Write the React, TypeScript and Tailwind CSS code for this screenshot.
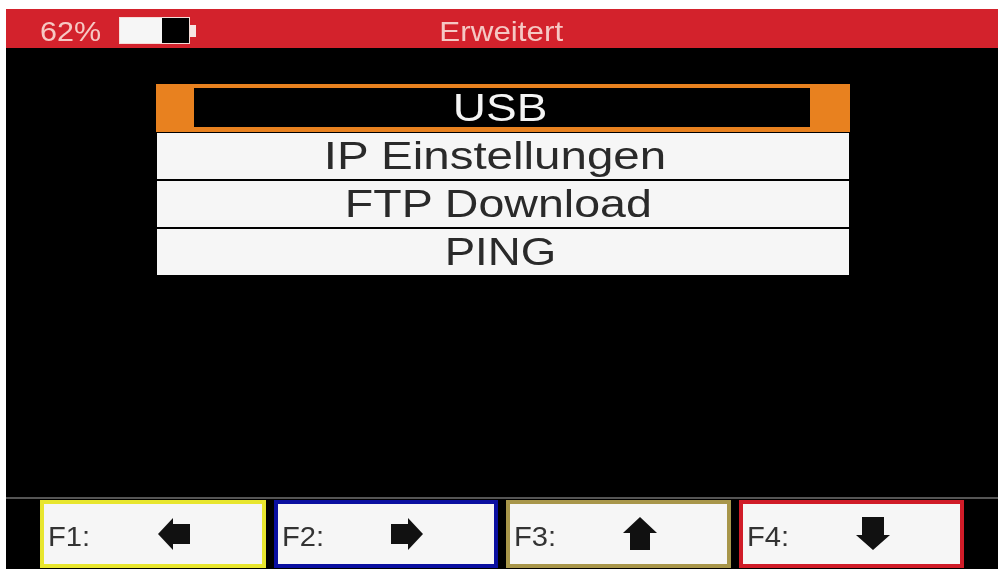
const fkeys = [
  { label: 'F1:', border: 'border-[#e8e62e]', icon: 'M1 17 L16 1 V7 H33 V27 H16 V33 Z', w: 'w-[226px]' },
  { label: 'F2:', border: 'border-[#0a0fa0]', icon: 'M32 17 L17 1 V7 H0 V27 H17 V33 Z', w: 'w-[224px]' },
  { label: 'F3:', border: 'border-[#a8964a]', icon: 'M17 0 L34 16 H27 V33 H7 V16 H0 Z', w: 'w-[225px]' },
  { label: 'F4:', border: 'border-[#d01c28]', icon: 'M17 33 L34 18 H28 V0 H6 V18 H0 Z', w: 'w-[225px]' },
];

const rows = [
  { text: 'IP Einstellungen', className: 'pr-[16px]', scale: 'scale-x-[1.25]' },
  { text: 'FTP Download', className: 'pr-[9px]', scale: 'scale-x-[1.225]' },
  { text: 'PING', className: 'pr-[6px]', scale: 'scale-x-[1.2]' },
];

export default function App() {
  return (
    <div className="h-[571px] w-[1001px] overflow-hidden bg-white pl-[6px] pt-[9px] font-['Liberation_Sans',sans-serif] blur-[0.6px]">
      <div className="flex h-[560px] w-[992px] flex-col bg-black">
        {/* Title bar */}
        <div className="relative flex h-[39px] shrink-0 items-center bg-[#d3222c] pl-[34px] text-[28px] text-[#f6c9c4]">
          <span className="mt-[6px] inline-block w-[79px] origin-left scale-x-[1.09] leading-[32px]">62%</span>
          <div className="mt-[4px] flex items-center">
            <div className="flex h-[27px] w-[71px] border border-[#f6dcd8]">
              <div className="w-[42px] bg-[#f6f6f6]" />
              <div className="flex-1 bg-black" />
            </div>
            <div className="h-[12px] w-[6px] bg-[#f6e6e4]" />
          </div>
          <div className="absolute inset-x-0 top-[7px] pr-[2px] text-center leading-[32px]">
            <span className="inline-block scale-x-[1.12] text-[#f5c8c4]">Erweitert</span>
          </div>
        </div>

        {/* Menu */}
        <div className="flex-1 pl-[150px] pt-[36px]">
          <div className="w-[694px] text-center text-[38px] leading-[46px] text-[#2a2a2a]">
            <div className="h-[48px] bg-[#e8811f] pb-[5px] pl-[38px] pr-[40px] pt-[4px]">
              <div className="h-[39px] bg-black pr-[3px] leading-[40px] text-[#f4f4f4]">
                <span className="inline-block scale-x-[1.21]">USB</span>
              </div>
            </div>
            <div className="mt-[1px] flex flex-col gap-[2px] px-[1px]">
              {rows.map((row) => (
                <div key={row.text} className={`h-[46px] bg-[#f6f6f6] ${row.className}`}>
                  <span className={`inline-block ${row.scale}`}>{row.text}</span>
                </div>
              ))}
            </div>
          </div>
        </div>

        {/* Function keys */}
        <div className="flex h-[72px] shrink-0 gap-[8px] border-t-2 border-[#555] pl-[34px] pt-[1px]">
          {fkeys.map((key) => (
            <div
              key={key.label}
              className={`relative flex h-[68px] items-center border-[4px] bg-[#f6f6f6] pl-[4px] text-[27px] text-[#333] ${key.border} ${key.w}`}
            >
              <span className="mt-[6px] inline-block origin-left scale-x-[1.08]">{key.label}</span>
              <svg
                className="absolute left-[113px] top-[13px]"
                width="34"
                height="34"
                viewBox="0 0 34 34"
              >
                <path d={key.icon} fill="#111" />
              </svg>
            </div>
          ))}
        </div>
      </div>
    </div>
  );
}
